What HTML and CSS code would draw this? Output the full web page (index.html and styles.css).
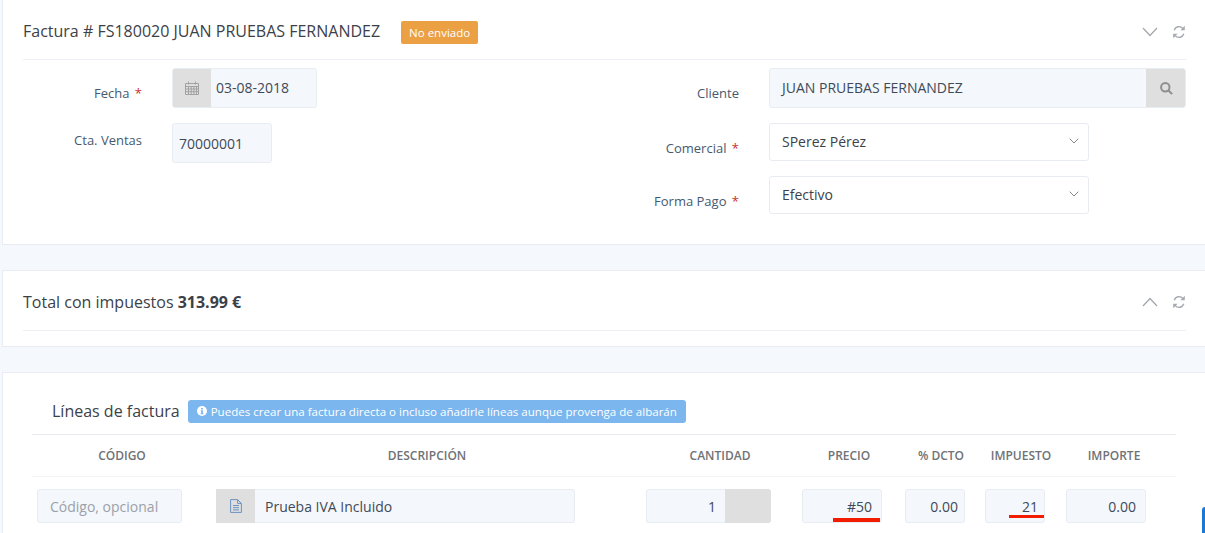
FILE: index.html
```html
<!DOCTYPE html>
<html lang="es">
<head>
<meta charset="utf-8">
<title>Factura</title>
<link rel="stylesheet" href="styles.css">
</head>
<body>
<section class="panel panel-main">
  <header class="panel-head head-main">
    <h2 class="title">Factura # FS180020 JUAN PRUEBAS FERNANDEZ</h2>
    <span class="badge-status">No enviado</span>
    <span class="tools">
      <svg class="chev" viewBox="0 0 16 10"><path d="M1 1l7 7.5L15 1"/></svg>
      <svg class="sync" viewBox="0 0 14 14"><path class="arc" d="M2.2 5.2A5 5 0 0 1 10.8 3.4M11.8 8.8A5 5 0 0 1 3.2 10.6"/><path class="tip" d="M12.8 0.800v4.400H8.400zM1.200 13.200V8.800h4.400z"/></svg>
    </span>
  </header>
  <div class="form">
    <div class="col">
      <div class="field">
        <label class="lab lab-low">Fecha <i>*</i></label>
        <div class="group date">
          <span class="addon cal"><svg viewBox="0 0 14 14"><path d="M0.500 2.500h13v11h-13zM0.500 5.500h13M0.500 8h13M0.500 10.700h13M3.500 5.500v8M6.200 5.500v8M8.900 5.500v8M11.500 5.500v8M3.500 0.500v3M10.500 0.500v3"/></svg></span>
          <span class="val">03-08-2018</span>
        </div>
      </div>
      <div class="field">
        <label class="lab lab-cta">Cta. Ventas</label>
        <div class="input cta">70000001</div>
      </div>
    </div>
    <div class="col">
      <div class="field">
        <label class="lab lab-low">Cliente</label>
        <div class="group client">
          <span class="val val-client">JUAN PRUEBAS FERNANDEZ</span>
          <span class="addon search"><svg viewBox="0 0 13 13"><circle cx="5.300" cy="5.300" r="4.200"/><path d="M8.500 8.500l3.600 3.600"/></svg></span>
        </div>
      </div>
      <div class="field">
        <label class="lab lab-sel">Comercial <i>*</i></label>
        <div class="select">SPerez Pérez<svg viewBox="0 0 10 6"><path d="M0.700 0.700L5 5l4.300-4.300"/></svg></div>
      </div>
      <div class="field">
        <label class="lab lab-sel">Forma Pago <i>*</i></label>
        <div class="select">Efectivo<svg viewBox="0 0 10 6"><path d="M0.700 0.700L5 5l4.300-4.300"/></svg></div>
      </div>
    </div>
  </div>
</section>

<section class="panel panel-total">
  <header class="panel-head head-total">
    <h2 class="title">Total con impuestos <b>313.99 €</b></h2>
    <span class="tools">
      <svg class="chev" viewBox="0 0 16 10"><path d="M1 9l7-7.500L15 9"/></svg>
      <svg class="sync" viewBox="0 0 14 14"><path class="arc" d="M2.200 5.200A5 5 0 0 1 10.800 3.400M11.800 8.800A5 5 0 0 1 3.200 10.600"/><path class="tip" d="M12.800 0.800v4.400H8.400zM1.200 13.200V8.800h4.400z"/></svg>
    </span>
  </header>
</section>

<section class="panel panel-lines">
  <div class="lines-head">
    <h3 class="lines-title">Líneas de factura</h3>
    <span class="badge-info"><svg viewBox="0 0 10 10"><circle cx="5" cy="5" r="5"/><path d="M4.100 2h1.800v1.500H4.100zM3.700 4.200h2.200v3h.6v1H3.600v-1h.6V5.200h-.5z"/></svg>Puedes crear una factura directa o incluso añadirle líneas aunque provenga de albarán</span>
  </div>
  <div class="grid grid-head">
    <span>CÓDIGO</span>
    <span>DESCRIPCIÓN</span>
    <span>CANTIDAD</span>
    <span>PRECIO</span>
    <span>% DCTO</span>
    <span>IMPUESTO</span>
    <span>IMPORTE</span>
  </div>
  <div class="grid grid-row">
    <div class="c-cod"><div class="cell placeholder">Código, opcional</div></div>
    <div class="c-desc">
      <div class="cell-group">
        <span class="addon file"><svg viewBox="0 0 12 14"><path d="M0.600 0.600h7l3.800 3.800v9H0.600zM7.600 0.600v3.800h3.800M3 6.500h6M3 8.700h6M3 10.900h6"/></svg></span>
        <span class="cell desc">Prueba IVA Incluido</span>
      </div>
    </div>
    <div class="c-cant">
      <div class="cell-group">
        <span class="cell num cant">1</span>
        <span class="addon blank"></span>
      </div>
    </div>
    <div class="c-prec"><div class="cell num marked">#50<span class="redline red-a"></span></div></div>
    <div class="c-dcto"><div class="cell num tight">0.00</div></div>
    <div class="c-imp"><div class="cell num tight">21<span class="redline red-b"></span></div></div>
    <div class="c-tot"><div class="cell num">0.00</div></div>
  </div>
</section>
<span class="float-edge"></span>
</body>
</html>
```
FILE: styles.css
```css
* { box-sizing: border-box; }
html, body { margin: 0; height: 533px; overflow: hidden; }
body {
  position: relative;
  background: #f5f8fc;
  font-family: "Open Sans", sans-serif;
  font-size: 14px;
  color: #3f4a59;
}
.panel {
  margin-left: 2px;
  background: #fff;
  border: 1px solid #e9edf3;
  border-right: 0;
  padding: 0 19px 0 20px;
}
.panel-main { height: 245px; border-top: 0; margin-bottom: 25px; }
.panel-total { height: 77px; margin-bottom: 25px; }
.panel-lines { height: 170px; border-bottom: 0; padding: 0; }

.panel-head { display: flex; align-items: center; border-bottom: 1px solid #eceff3; }
.head-main { height: 60px; padding-top: 3px; }
.head-total { height: 60px; padding-top: 2px; }
.title { margin: 0; font-size: 16px; font-weight: 400; color: #3c4149; }
.title b { font-weight: 700; }
.badge-status {
  margin: 2px 0 0 21px;
  background: #eba044;
  color: #fff;
  font-size: 11.5px;
  line-height: 23px;
  padding: 0 8px;
  border-radius: 2px;
}
.tools { margin-left: auto; display: flex; align-items: center; padding-top: 1px; }
.chev { width: 16px; height: 10px; fill: none; stroke: #a3a8ae; stroke-width: 1.300; margin-right: 14px; }
.sync { width: 14px; height: 14px; margin-right: 0; }
.sync .arc { fill: none; stroke: #a5a9ae; stroke-width: 1.400; }
.sync .tip { fill: #a5a9ae; }

.form { display: grid; grid-template-columns: 597px 1fr; padding-top: 8px; }
.field { display: flex; margin-bottom: 15px; }
.lab { width: 119px; margin-right: 30px; text-align: right; font-size: 13px; color: #46596e; flex: none; }
.lab i { font-style: normal; color: #c9302c; margin-left: 2px; }
.lab-low { padding-top: 16px; }
.lab-cta { padding-top: 8px; }
.lab-sel { padding-top: 16px; }

.group { display: flex; height: 40px; border: 1px solid #e8edf3; border-radius: 3px; background: #f4f7fb; font-size: 14px; overflow: hidden; }
.date { width: 145px; }
.client { width: 417px; border-left-color: #e8edf3; }
.addon { display: flex; align-items: center; justify-content: center; background: #dfdfdf; flex: none; }
.cal { width: 39px; margin: -1px 0 -1px -1px; }
.cal svg { width: 14px; height: 14px; fill: none; stroke: #a2a2a2; stroke-width: 1; }
.val { padding-left: 5px; line-height: 38px; color: #3f4a59; }
.val-client { flex: 1; padding-left: 12px; font-size: 14px; }
.search { width: 40px; margin: -1px -1px -1px 0; }
.search svg { width: 13px; height: 13px; fill: none; stroke: #8e8e8e; stroke-width: 2; }
.input.cta { width: 100px; height: 40px; border: 1px solid #e8edf3; border-radius: 3px; background: #f4f7fb; padding-left: 6px; line-height: 40px; }

.select {
  width: 320px; height: 38px;
  display: flex; align-items: center; justify-content: space-between;
  border: 1px solid #e8ebf0; border-radius: 3px; background: #fff;
  padding: 0 9px 2px 12px; color: #3c4149; font-size: 14px;
}
.select svg { width: 10px; height: 6px; fill: none; stroke: #7f868d; stroke-width: 1; }

.lines-head { display: flex; align-items: center; height: 61px; padding: 15px 0 0 49px; }
.lines-title { margin: 0; font-size: 16px; font-weight: 400; color: #3c4149; }
.badge-info {
  margin-left: 8px;
  display: flex; align-items: center;
  height: 23px;
  padding: 0 9px 0 9px;
  background: #7cb6ee;
  color: #fff;
  font-size: 11.55px;
  border-radius: 3px;
}
.badge-info svg { width: 10px; height: 10px; margin-right: 4px; fill: #fff; }
.badge-info svg path { fill: #7cb6ee; }

.grid {
  display: grid;
  grid-template-columns: 180px 430px 156px 102px 82px 78px 108px 8px;
  margin-left: 29px;
  width: 1144px;
}
.grid-head {
  height: 43px;
  margin-top: 0;
  border-top: 1px solid #e9ecf1;
  border-bottom: 1px solid #f1f3f6;
  align-items: center;
  font-size: 12px;
  font-weight: 600;
  text-align: center;
  color: #6f7276;
}
.grid-row { padding-top: 12px; }
.cell {
  height: 34px;
  line-height: 34px;
  border: 1px solid #e8edf3;
  border-radius: 3px;
  background: #f4f7fb;
  font-size: 14px;
  position: relative;
}
.num { text-align: right; padding-right: 9px; }
.tight { padding-right: 6px; }
.cell-group { display: flex; height: 34px; }
.placeholder { color: #9aa1a9; padding-left: 12px; }
.c-cod { padding-left: 5px; }
.c-cod .cell { width: 145px; }
.c-desc { padding-left: 4px; }
.file { width: 39px; height: 34px; }
.file svg { width: 12px; height: 14px; fill: none; stroke: #6c93bd; stroke-width: 1; }
.desc { width: 320px; border-left: 0; border-radius: 0 3px 3px 0; padding-left: 10px; }
.c-cant { padding-left: 4px; }
.cant { width: 79px; border-right: 0; border-radius: 3px 0 0 3px; padding-right: 9px; }
.blank { width: 46px; height: 34px; border-radius: 0 3px 3px 0; }
.c-prec { padding-left: 4px; }
.c-prec .cell { width: 80px; }
.c-dcto { padding-left: 5px; }
.c-dcto .cell { width: 60px; }
.c-imp { padding-left: 3px; }
.c-imp .cell { width: 60px; }
.c-tot { padding-left: 6px; }
.c-tot .cell { width: 80px; }
.redline { position: absolute; background: #f41c00; }
.red-a { left: 30px; right: 1px; top: 28px; height: 4px; }
.red-b { left: 23px; right: 0; top: 25px; height: 3px; }
.float-edge { position: absolute; right: 0; top: 507px; width: 3px; height: 26px; background: #1a78d6; border-radius: 3px 0 0 0; }
```
